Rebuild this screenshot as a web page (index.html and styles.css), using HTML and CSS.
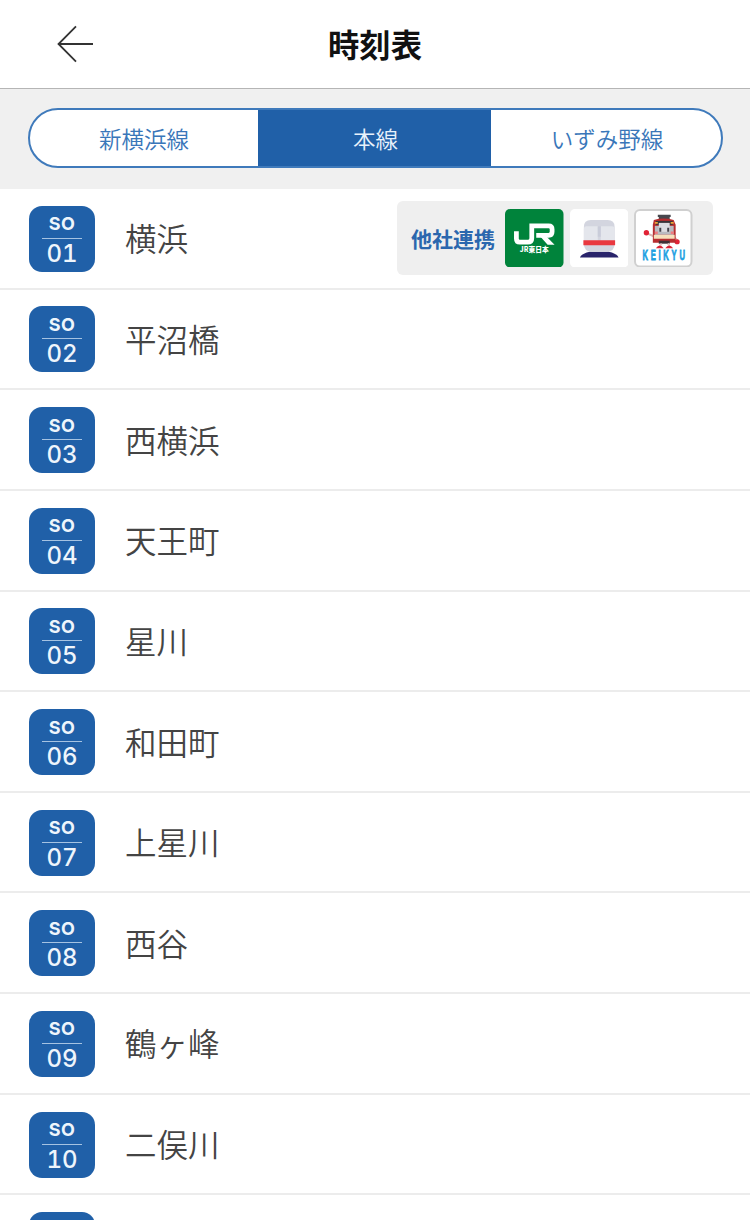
FILE: index.html
```
<!DOCTYPE html>
<html lang="ja">
<head>
    <meta charset="UTF-8">
    <meta name="viewport" content="width=device-width, initial-scale=1.0">
    <title>時刻表</title>
    <link rel="stylesheet" href="styles.css">
</head>
<body>
    <header class="header">
        <a class="back" href="#" aria-label="戻る">
            <svg width="38" height="38" viewBox="0 0 38 38" fill="none" stroke="#333" stroke-width="1.8">
                <path d="M20 1.3 2.5 19 20 36.7M2 19h35"/>
            </svg>
        </a>
        <h1>時刻表</h1>
    </header>

    <nav class="tabs">
        <div class="tab-group">
            <a class="tab" href="#">新横浜線</a>
            <a class="tab active" href="#">本線</a>
            <a class="tab" href="#">いずみ野線</a>
        </div>
    </nav>

    <ul class="stations">
        <li class="station">
            <div class="badge"><span class="line">SO</span><span class="num">01</span></div>
            <span class="name">横浜</span>
            <div class="partners">
                <span class="partners-label">他社連携</span>
                <!-- JR東日本 -->
                <svg class="logo" viewBox="0 0 59 59">
                    <rect width="59" height="59" rx="5" fill="#00833b"/>
                    <path d="M11.500 22.500V30q0 3.500 3.500 3.500h8q4 0 4-4V17h17q3.500 0 3.500 3.500v2.500q0 3.500-3.500 3.500H31.500" fill="none" stroke="#fff" stroke-width="4.800"/>
                    <path d="M34 26h6l10 10h-7z" fill="#fff"/>
                    <text class="jr-name" x="29.500" y="43.800" text-anchor="middle" textLength="29" lengthAdjust="spacingAndGlyphs">JR東日本</text>
                </svg>
                <!-- 地下鉄 -->
                <svg class="logo" viewBox="0 0 59 59">
                    <rect width="59" height="59" rx="5" fill="#fff"/>
                    <path d="M10 49q1-4 10-6h19q9 2 10 6z" fill="#29246b"/>
                    <path d="M14 18q0-7 7-7h17q7 0 7 7v17q0 8-8 8H22q-8 0-8-8z" fill="#d3d5df"/>
                    <path d="M14 20q0-2.500 2.500-2.500H28V32H14zM31 17.500h11.500q2.500 0 2.500 2.500v12H31z" fill="#e4e6ec"/>
                    <path d="M28 17.500h3V28h-3z" fill="#c9ccd9"/>
                    <path d="M13.500 31.500h32v5h-32z" fill="#e93840"/>
                </svg>
                <!-- 京急 -->
                <svg class="logo" viewBox="0 0 59 59">
                    <rect x="1" y="1" width="57" height="57" rx="5" fill="#fff" stroke="#d0d0d0" stroke-width="2"/>
                    <path d="M24 7h13M25 9h11" stroke="#47474d" stroke-width="2.200"/>
                    <path d="M21 28 12 24M41 29l4 4" stroke="#d9b4b0" stroke-width="2"/>
                    <circle cx="12.500" cy="24" r="2.700" fill="#e12235"/>
                    <circle cx="43.500" cy="33" r="2.600" fill="#e12235"/>
                    <path d="M20 11q10-3 20 0l2 5v18H19V16z" fill="#b72d2f"/>
                    <path d="M22 12h17v4H22z" fill="#393438"/>
                    <path d="M21 14h3M37 14h3" stroke="#eda638" stroke-width="2"/>
                    <path d="M21 17h19v9H21z" fill="#b9bbc1"/>
                    <path d="M25 14h11v9H25z" fill="#dcdde1"/>
                    <path d="M26.500 19v4M34.500 19v4" stroke="#44434b" stroke-width="2"/>
                    <path d="M20 26h21v4H20z" fill="#f6e1bd"/>
                    <path d="M21 24h3M37 24h3" stroke="#ef7c80" stroke-width="2.500"/>
                    <path d="M25 32h11v3H25z" fill="#403137"/>
                    <path d="m28 35-2 2M34 35l2 2" stroke="#e9c7c5" stroke-width="2"/>
                    <path d="M22 39.500q4-5.500 8 0zM31.500 39.500q4-5.500 8 0z" fill="#dc2335"/>
                    <text class="keikyu-name" transform="translate(8.500 51.800) scale(.55 1)" textLength="78" lengthAdjust="spacing">KEIKYU</text>
                </svg>
            </div>
        </li>
        <li class="station">
            <div class="badge"><span class="line">SO</span><span class="num">02</span></div>
            <span class="name">平沼橋</span>
        </li>
        <li class="station">
            <div class="badge"><span class="line">SO</span><span class="num">03</span></div>
            <span class="name">西横浜</span>
        </li>
        <li class="station">
            <div class="badge"><span class="line">SO</span><span class="num">04</span></div>
            <span class="name">天王町</span>
        </li>
        <li class="station">
            <div class="badge"><span class="line">SO</span><span class="num">05</span></div>
            <span class="name">星川</span>
        </li>
        <li class="station">
            <div class="badge"><span class="line">SO</span><span class="num">06</span></div>
            <span class="name">和田町</span>
        </li>
        <li class="station">
            <div class="badge"><span class="line">SO</span><span class="num">07</span></div>
            <span class="name">上星川</span>
        </li>
        <li class="station">
            <div class="badge"><span class="line">SO</span><span class="num">08</span></div>
            <span class="name">西谷</span>
        </li>
        <li class="station">
            <div class="badge"><span class="line">SO</span><span class="num">09</span></div>
            <span class="name">鶴ヶ峰</span>
        </li>
        <li class="station">
            <div class="badge"><span class="line">SO</span><span class="num">10</span></div>
            <span class="name">二俣川</span>
        </li>
        <li class="station">
            <div class="badge"></div>
        </li>
    </ul>
</body>
</html>
```
FILE: styles.css
```
* {
    box-sizing: border-box;
}
body {
    margin: 0;
    background: #fff;
    color: #444;
    font-family: "Noto Sans CJK JP", sans-serif;
}
a {
    color: inherit;
    text-decoration: none;
}

.header {
    display: grid;
    grid-template-columns: 150px 1fr 150px;
    align-items: center;
    height: 89px;
    border-bottom: 1px solid #b5b5b5;
}
.back {
    display: flex;
    justify-content: center;
}
.header h1 {
    margin: 0;
    color: #111;
    font-size: 31.3px;
    line-height: 40px;
    text-align: center;
}

.tabs {
    height: 100px;
    padding: 19px 27px 20px 28px;
    background: #f0f0f0;
}
.tab-group {
    display: grid;
    grid-template-columns: 228px 233px 1fr;
    height: 60px;
    overflow: hidden;
    border: 2px solid #3f7abb;
    border-radius: 30px;
    background: #fff;
}
.tab {
    display: flex;
    align-items: center;
    justify-content: center;
    color: #3976b9;
    font-size: 22.5px;
    font-weight: 350;
}
.tab.active {
    margin: -1px 0;
    padding-left: 2px;
    background: #2060a8;
    color: #e8f1fb;
}
.tab:last-child {
    padding-left: 2px;
}

.stations {
    height: 1031px;
    margin: 0;
    padding: 0;
    overflow: hidden;
    list-style: none;
}
.station {
    display: flex;
    align-items: center;
    height: 100.65px;
    padding: 1px 37px 0 29px;
    border-bottom: 2px solid #ececec;
}
.badge {
    display: flex;
    flex-direction: column;
    align-items: center;
    width: 66px;
    height: 66px;
    border-radius: 13px;
    background: #2060a8;
    color: #eef5fc;
    font-family: Inter, sans-serif;
}
.line {
    width: 40px;
    height: 33px;
    padding-top: 7.5px;
    border-bottom: 1.5px solid #a6c3e2;
    font-size: 18px;
    font-weight: 700;
    line-height: 21px;
    text-align: center;
    letter-spacing: 0.5px;
}
.num {
    font-size: 24px;
    font-weight: 500;
    line-height: 29px;
    font-variant-numeric: tabular-nums;
}
.name {
    margin: -3px 0 0 30px;
    font-size: 31.5px;
    font-weight: 350;
    line-height: 40px;
}

.partners {
    display: flex;
    align-items: center;
    gap: 6px;
    width: 316px;
    height: 74px;
    margin: -2px 0 0 auto;
    padding-left: 14px;
    border-radius: 6px;
    background: #efefef;
}
.partners-label {
    margin-right: 4px;
    color: #2b67ae;
    font-size: 21px;
    font-weight: 700;
    line-height: 30px;
    white-space: nowrap;
}
.logo {
    flex: none;
    width: 58.5px;
    height: 58.5px;
}
.jr-name {
    fill: #fff;
    font-size: 7px;
    font-weight: 900;
}
.keikyu-name {
    fill: #20a0e2;
    stroke: #20a0e2;
    stroke-width: 0.8px;
    font-family: "Liberation Sans", sans-serif;
    font-size: 14px;
    font-weight: 700;
}
```
